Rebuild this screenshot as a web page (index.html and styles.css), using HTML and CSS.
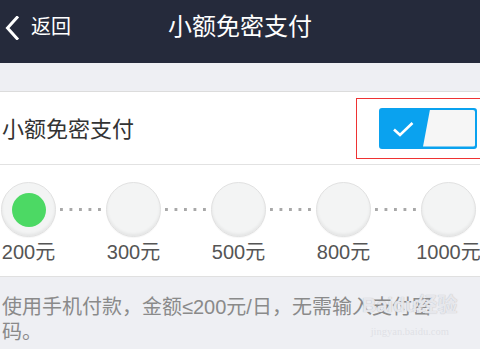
FILE: index.html
```html
<!DOCTYPE html>
<html lang="zh-CN">
<head>
<meta charset="utf-8">
<title>小额免密支付</title>
<link rel="stylesheet" href="styles.css">
</head>
<body>
<div class="page">
  <header class="topbar">
    <div class="back">
      <svg class="chev" width="14" height="24" viewBox="0 0 14 24"><polyline points="12,1.5 2.5,12 12,22.5" fill="none" stroke="#fff" stroke-width="3" stroke-linecap="square"/></svg>
      <span class="back-text">返回</span>
    </div>
    <h1 class="title">小额免密支付</h1>
    <div class="spacer"></div>
  </header>
  <div class="gap"></div>
  <section class="row">
    <span class="row-title">小额免密支付</span>
    <div class="highlight">
      <div class="toggle">
        <div class="toggle-on">
          <svg width="22" height="16" viewBox="0 0 22 16"><path d="M2 8.5 L8 14 L20.5 2" fill="none" stroke="#fff" stroke-width="2.6"/></svg>
        </div>
        <div class="toggle-off"></div>
      </div>
    </div>
  </section>
  <section class="steps">
    <div class="step"><div class="circle"><div class="dot-active"></div></div><span class="label">200元</span></div>
    <div class="link"></div>
    <div class="step"><div class="circle"></div><span class="label">300元</span></div>
    <div class="link"></div>
    <div class="step"><div class="circle"></div><span class="label">500元</span></div>
    <div class="link"></div>
    <div class="step"><div class="circle"></div><span class="label">800元</span></div>
    <div class="link"></div>
    <div class="step"><div class="circle"></div><span class="label">1000元</span></div>
  </section>
  <p class="desc">使用手机付款，金额≤200元/日，无需输入支付密码。</p>
  <div class="watermark"><span class="wm-logo">Baidu经验</span><span class="wm-url">jingyan.baidu.com</span></div>
</div>
</body>
</html>
```
FILE: styles.css
```css
html, body {
  margin: 0;
  padding: 0;
  background: #eeeff3;
  overflow: hidden;
}
.page {
  width: 480px;
  height: 349px;
  position: relative;
  overflow: hidden;
  font-family: "Liberation Sans", "Noto Sans CJK SC", sans-serif;
}
.topbar {
  height: 63px;
  background: #252a3b;
  display: grid;
  grid-template-columns: 1fr auto 1fr;
  align-items: start;
  box-sizing: border-box;
  padding-top: 13px;
  color: #fff;
}
.back {
  display: flex;
  align-items: center;
  padding-left: 5px;
  height: 28px;
}
.chev {
  display: block;
  margin-top: 2px;
}
.back-text {
  font-size: 20px;
  line-height: 28px;
  margin-left: 12px;
}
.title {
  margin: 0;
  font-size: 24px;
  font-weight: normal;
  line-height: 28px;
}
.gap {
  height: 28px;
}
.row {
  background: #fff;
  border-top: 1px solid #dcdcdc;
  border-bottom: 1px solid #e2e2e2;
  height: 72px;
  display: flex;
  align-items: center;
  justify-content: space-between;
  padding-left: 2px;
}
.row-title {
  font-size: 22px;
  color: #333;
  line-height: 28px;
  margin-top: 4px;
}
.highlight {
  border: 1px solid #ee3333;
  width: 126px;
  height: 59px;
  margin-right: -4px;
  box-sizing: content-box;
  display: flex;
  align-items: flex-start;
  padding: 0;
}
.toggle {
  margin-left: 22px;
  margin-top: 9px;
  width: 98px;
  height: 41px;
  box-sizing: border-box;
  border: 2px solid #0aa2ef;
  border-radius: 3px;
  background: #0aa2ef;
  display: flex;
}
.toggle-on {
  width: 42px;
  display: flex;
  align-items: center;
  justify-content: center;
  padding-left: 1px;
  padding-top: 2px;
  box-sizing: border-box;
}
.toggle-on svg {
  display: block;
}
.toggle-off {
  flex: 1;
  background: #f6f6f6;
  clip-path: polygon(7px 0, 100% 0, 100% 100%, 0 100%);
  border-radius: 0 2px 2px 0;
}
.steps {
  background: #fff;
  border-bottom: 1px solid #e0e0e0;
  height: 112px;
  box-sizing: border-box;
  display: flex;
  align-items: flex-start;
  padding-left: 1px;
  padding-top: 17px;
}
.step {
  width: 55px;
  display: flex;
  flex-direction: column;
  align-items: center;
  flex: none;
}
.circle {
  width: 55px;
  height: 55px;
  box-sizing: border-box;
  border-radius: 50%;
  background: #f3f4f4;
  border: 1px solid #e1e1e1;
  box-shadow: inset 0 -2px 3px rgba(0, 0, 0, 0.06), 0 1px 1px rgba(0, 0, 0, 0.04);
  display: flex;
  align-items: center;
  justify-content: center;
}
.dot-active {
  width: 34px;
  height: 34px;
  border-radius: 50%;
  background: #4cd964;
}
.label {
  font-size: 20px;
  line-height: 24px;
  color: #555;
  margin-top: 3px;
  white-space: nowrap;
}
.link {
  width: 50px;
  flex: none;
  height: 3px;
  margin-top: 26px;
  box-sizing: border-box;
  padding: 0 3px 0 4px;
  background-image: linear-gradient(to right, #a8a8a8 3px, transparent 3px);
  background-size: 9.5px 3px;
  background-repeat: repeat-x;
  background-origin: content-box;
  background-clip: content-box;
}
.desc {
  margin: 0;
  width: 440px;
  padding: 18px 0 0 2px;
  font-size: 20px;
  line-height: 25px;
  color: #8a8a8a;
}
.watermark {
  position: absolute;
  left: 362px;
  top: 294px;
  display: flex;
  flex-direction: column;
  align-items: center;
  pointer-events: none;
}
.wm-logo {
  font-size: 20px;
  font-weight: bold;
  line-height: 22px;
  color: rgba(236, 237, 241, 0.92);
  text-shadow: 0 0 1px rgba(150, 150, 160, 0.7);
}
.wm-url {
  font-family: "Liberation Serif", serif;
  font-size: 10.5px;
  line-height: 12px;
  margin-top: 10px;
  color: rgba(222, 223, 229, 0.95);
}
```
